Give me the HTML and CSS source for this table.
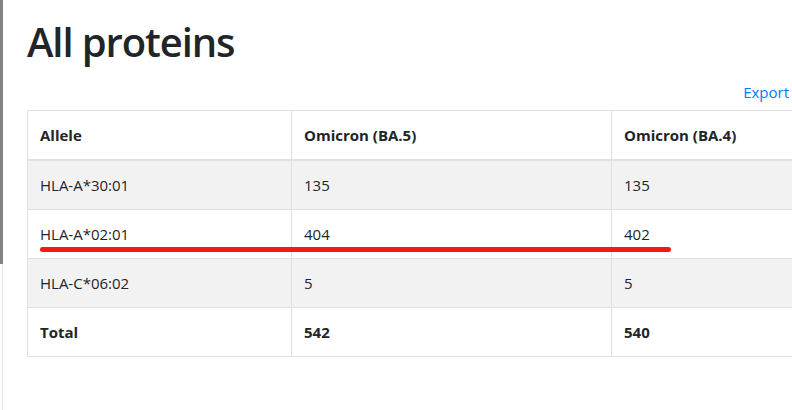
FILE: index.html
```html
<!DOCTYPE html>
<html lang="en">
<head>
<meta charset="utf-8">
<title>All proteins</title>
<link rel="stylesheet" href="styles.css">
</head>
<body>
<div class="edge"><div class="edge-thumb"></div><div class="edge-track"></div></div>
<main class="page">
  <h1 class="title">All proteins</h1>
  <div class="actions"><a class="export" href="#">Export</a></div>
  <div class="table-wrap">
    <table class="data">
      <colgroup><col class="c1"><col class="c2"><col class="c3"></colgroup>
      <thead>
        <tr><th>Allele</th><th>Omicron (BA.5)</th><th>Omicron (BA.4)</th></tr>
      </thead>
      <tbody>
        <tr class="odd"><td>HLA-A*30:01</td><td>135</td><td>135</td></tr>
        <tr><td>HLA-A*02:01</td><td>404</td><td>402</td></tr>
        <tr class="odd"><td>HLA-C*06:02</td><td>5</td><td>5</td></tr>
        <tr class="total"><td>Total</td><td>542</td><td>540</td></tr>
      </tbody>
    </table>
    <div class="mark"></div>
  </div>
</main>
</body>
</html>
```
FILE: styles.css
```css
html, body {
  margin: 0;
  padding: 0;
  background: #fff;
}
body {
  font-family: "Open Sans", "Noto Sans", "Liberation Sans", sans-serif;
  color: #212529;
  font-size: 15px;
  overflow: hidden;
  width: 792px;
  height: 410px;
  position: relative;
}
.edge {
  position: absolute;
  left: 0;
  top: 0;
  width: 3px;
  height: 410px;
}
.edge-thumb {
  width: 3px;
  height: 264px;
  background: #838383;
}
.edge-track {
  margin-left: 2px;
  width: 1px;
  height: 146px;
  background: #e4e4e4;
}
.page {
  padding-left: 27px;
  overflow: hidden;
}
.title {
  margin: 18px 0 0 0;
  font-size: 40px;
  line-height: 48px;
  font-weight: 550;
  letter-spacing: -1.1px;
}
.actions {
  display: flex;
  justify-content: flex-end;
  margin-top: 14px;
  padding-right: 3px;
  height: 24px;
  line-height: 24px;
}
.export {
  color: #007bff;
  text-decoration: none;
  font-size: 15px;
}
.table-wrap {
  position: relative;
  margin-top: 6px;
}
.data {
  border-collapse: collapse;
  width: 900px;
  table-layout: fixed;
}
.c1 { width: 264px; }
.c2 { width: 320px; }
.c3 { width: 316px; }
.data th, .data td {
  border: 1px solid #dee2e6;
  padding: 12px 12px;
  line-height: 24px;
  text-align: left;
  vertical-align: top;
}
.data th {
  font-weight: 700;
  border-bottom: 2px solid #dee2e6;
}
.data tr.odd td {
  background: #f2f2f2;
}
.data tr.total td {
  font-weight: 700;
}
.mark {
  position: absolute;
  left: 13px;
  top: 137px;
  width: 631px;
  height: 5px;
  border-radius: 3px;
  background: #f51a10;
}
```
